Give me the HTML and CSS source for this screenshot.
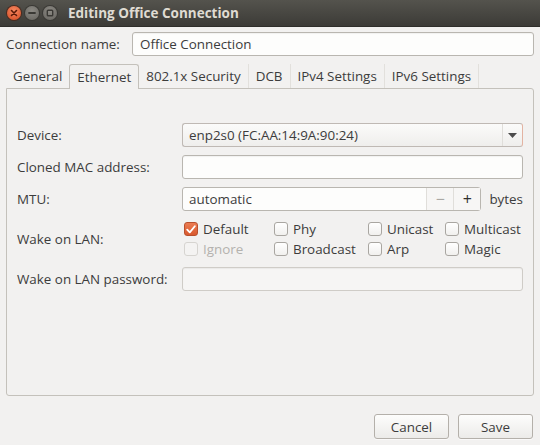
FILE: index.html
```html
<!DOCTYPE html>
<html lang="en">
<head>
    <meta charset="UTF-8">
    <meta name="viewport" content="width=device-width, initial-scale=1.0">
    <title>Editing Office Connection</title>
    <link rel="stylesheet" href="styles.css">
</head>
<body>
    <div class="window">
        <div class="titlebar">
            <div class="wcontrols">
                <span class="wbtn close">
                    <svg width="14" height="14" viewBox="0 0 14 14"><path d="M4.5 4.5l5 5M9.5 4.5l-5 5" stroke="#5a1a08" stroke-width="1.6" stroke-linecap="round"/></svg>
                </span>
                <span class="wbtn">
                    <svg width="14" height="14" viewBox="0 0 14 14"><path d="M4 7h6" stroke="#3a3935" stroke-width="1.8" stroke-linecap="round"/></svg>
                </span>
                <span class="wbtn">
                    <svg width="14" height="14" viewBox="0 0 14 14"><rect x="4.3" y="4.3" width="5.4" height="5.4" rx="0.8" fill="none" stroke="#3a3935" stroke-width="1.4"/></svg>
                </span>
            </div>
            <div class="title">Editing Office Connection</div>
        </div>

        <div class="content">
            <div class="name-row">
                <label class="lbl">Connection name:</label>
                <div class="entry grow">Office Connection</div>
            </div>

            <div class="tabs">
                <div class="tab">General</div>
                <div class="tab active">Ethernet</div>
                <div class="tab">802.1x Security</div>
                <div class="tab sep">DCB</div>
                <div class="tab sep">IPv4 Settings</div>
                <div class="tab sep last">IPv6 Settings</div>
            </div>

            <div class="panel">
                <div class="form">
                    <label class="lbl">Device:</label>
                    <div class="combo">
                        <span class="combo-text">enp2s0 (FC:AA:14:9A:90:24)</span>
                        <span class="combo-arrow">
                            <svg width="9" height="5" viewBox="0 0 9 5"><path d="M0 0h9L4.5 5z" fill="#4c4c4c"/></svg>
                        </span>
                    </div>

                    <label class="lbl">Cloned MAC address:</label>
                    <div class="entry"></div>

                    <label class="lbl">MTU:</label>
                    <div class="mtu">
                        <div class="spin">
                            <span class="spin-text">automatic</span>
                            <span class="spin-btn dim">&minus;</span>
                            <span class="spin-btn">+</span>
                        </div>
                        <span class="unit">bytes</span>
                    </div>

                    <label class="lbl">Wake on LAN:</label>
                    <div class="wol">
                        <div class="check"><span class="box on">
                            <svg width="10" height="9" viewBox="0 0 10 9"><path d="M1.2 4.6l2.6 2.8L8.8 1.2" fill="none" stroke="#fff" stroke-width="1.8" stroke-linecap="round" stroke-linejoin="round"/></svg>
                        </span>Default</div>
                        <div class="check"><span class="box"></span>Phy</div>
                        <div class="check"><span class="box"></span>Unicast</div>
                        <div class="check"><span class="box"></span>Multicast</div>
                        <div class="check off"><span class="box"></span>Ignore</div>
                        <div class="check"><span class="box"></span>Broadcast</div>
                        <div class="check"><span class="box"></span>Arp</div>
                        <div class="check"><span class="box"></span>Magic</div>
                    </div>

                    <label class="lbl">Wake on LAN password:</label>
                    <div class="entry insens"></div>
                </div>
            </div>

            <div class="actions">
                <button class="btn">Cancel</button>
                <button class="btn">Save</button>
            </div>
        </div>
    </div>
</body>
</html>
```

FILE: styles.css
```css
body {
    margin: 0;
    background-color: #f2f1f0;
    font-family: "Open Sans", "DejaVu Sans", sans-serif;
    font-size: 13.4px;
    color: #3c3c3c;
}
.window {
    width: 540px;
    height: 445px;
    overflow: hidden;
    background-color: #f2f1f0;
}
.titlebar {
    height: 27px;
    display: flex;
    align-items: center;
    background: linear-gradient(#54534d, #3c3b37);
    border-bottom: 1px solid #2f2e2b;
    box-sizing: border-box;
}
.wcontrols {
    display: flex;
    gap: 4px;
    padding-left: 7px;
}
.wbtn {
    width: 14px;
    height: 14px;
    border-radius: 50%;
    background: radial-gradient(circle at 50% 35%, #8c8a84, #65635e);
    box-shadow: 0 0 0 1px #3a3935;
    display: flex;
}
.wbtn.close {
    background: radial-gradient(circle at 50% 35%, #f78a63, #d5481f);
    box-shadow: 0 0 0 1px #4a2a1e;
}
.title {
    margin-left: 11px;
    font-weight: bold;
    font-size: 13.5px;
    color: #dfdbd2;
}
.content {
    padding: 4px 6px 0 6px;
}
.name-row {
    display: flex;
    align-items: center;
    height: 26px;
}
.name-row .lbl {
    width: 126px;
}
.grow {
    flex: 1;
}
.entry {
    height: 24px;
    box-sizing: border-box;
    border: 1px solid #b9b6b0;
    border-radius: 3px;
    background-color: #fdfdfc;
    padding: 0 7px;
    display: flex;
    align-items: center;
    box-shadow: inset 0 1px 1px rgba(0, 0, 0, 0.05);
}
.entry.insens {
    background-color: #f6f5f4;
    border-color: #cfccc7;
}
.tabs {
    display: flex;
    align-items: flex-end;
    height: 25px;
    margin-top: 6px;
}
.tab {
    height: 24px;
    box-sizing: border-box;
    padding: 0 7px;
    display: flex;
    align-items: center;
    color: #3c3c3c;
}
.tab.active {
    border: 1px solid #c4c1bb;
    border-bottom: none;
    border-radius: 3px 3px 0 0;
    background-color: #f2f1f0;
    margin-bottom: -1px;
    height: 25px;
    position: relative;
}
.tab.sep {
    border-left: 1px solid #e2e0dc;
}
.tab.last {
    border-right: 1px solid #e2e0dc;
}
.panel {
    height: 308px;
    box-sizing: border-box;
    border: 1px solid #c4c1bb;
    border-radius: 0 3px 3px 3px;
    padding: 34px 10px 0 10px;
}
.form {
    display: grid;
    grid-template-columns: 165px 1fr;
    grid-template-rows: 24px 24px 24px 40px 24px;
    row-gap: 8px;
    align-items: center;
}
.combo {
    height: 24px;
    box-sizing: border-box;
    border: 1px solid #bfb9b4;
    border-right-color: #e3b3a2;
    border-radius: 3px;
    background: linear-gradient(#fbfbfa, #efeeec);
    display: flex;
    align-items: center;
}
.combo-text {
    flex: 1;
    padding-left: 6px;
}
.combo-arrow {
    width: 19px;
    align-self: stretch;
    border-left: 1px solid #e0deda;
    display: flex;
    align-items: center;
    justify-content: center;
}
.mtu {
    display: flex;
    align-items: center;
    gap: 8px;
}
.spin {
    flex: 1;
    height: 24px;
    box-sizing: border-box;
    border: 1px solid #b9b6b0;
    border-radius: 3px;
    background-color: #fdfdfc;
    display: flex;
    align-items: center;
}
.spin-text {
    flex: 1;
    padding-left: 6px;
}
.spin-btn {
    width: 26px;
    align-self: stretch;
    border-left: 1px solid #e0deda;
    display: flex;
    align-items: center;
    justify-content: center;
    font-size: 16px;
    color: #2e2e2e;
    background-color: #f7f6f5;
}
.spin-btn.dim {
    color: #aaa8a4;
}
.wol {
    display: grid;
    grid-template-columns: 90px 94px 77px 1fr;
    grid-auto-rows: 20px;
    align-items: center;
    margin-left: 2px;
}
.check {
    display: flex;
    align-items: center;
    gap: 5px;
    white-space: nowrap;
}
.check.off {
    color: #b4b2ae;
}
.box {
    width: 14px;
    height: 14px;
    box-sizing: border-box;
    border: 1px solid #a9a6a1;
    border-radius: 3px;
    background: linear-gradient(#ffffff, #f1f0ee);
    display: flex;
    align-items: center;
    justify-content: center;
}
.box.on {
    border-color: #b8502d;
    background: linear-gradient(#eb7c52, #d9592e);
}
.check.off .box {
    border-color: #d6d4d0;
    background: #f4f3f2;
}
.actions {
    display: flex;
    justify-content: flex-end;
    gap: 9px;
    margin-top: 18px;
    padding-right: 1px;
}
.btn {
    width: 75px;
    height: 25px;
    font-family: inherit;
    font-size: 13.4px;
    color: #3c3c3c;
    border: 1px solid #b4b0aa;
    border-radius: 3px;
    background: linear-gradient(#fdfdfc, #ecebe9);
    box-shadow: 0 1px 0 rgba(255, 255, 255, 0.6);
    padding: 0;
}
```
